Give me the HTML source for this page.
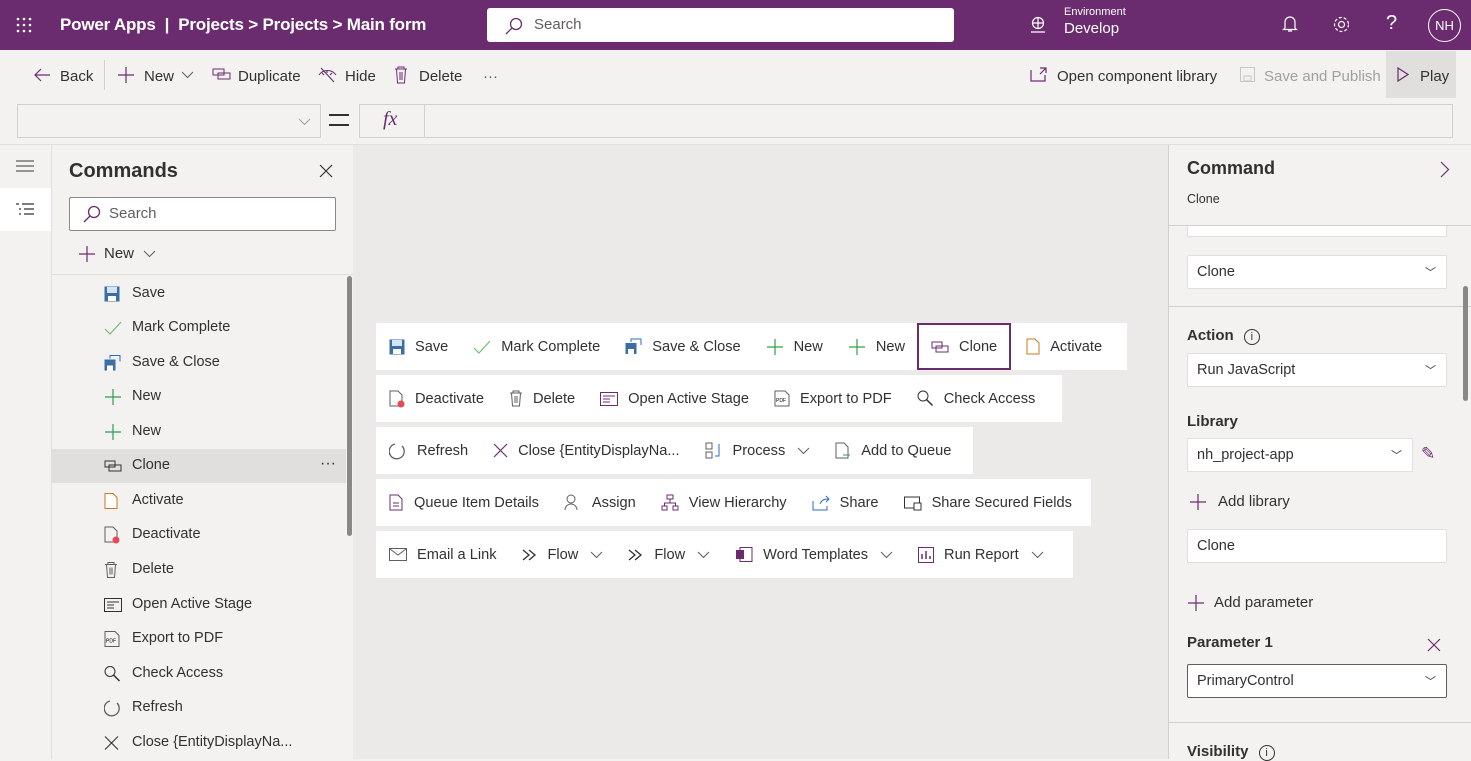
<!DOCTYPE html>
<html><head><meta charset="utf-8"><style>
*{box-sizing:border-box;margin:0;padding:0}
body{width:1471px;height:759px;overflow:hidden;font-family:"Segoe UI","Liberation Sans",sans-serif;background:#f3f2f1;color:#323130;position:relative;font-size:14px}
.a{position:absolute;white-space:nowrap}
.hdr{left:0;top:0;width:1471px;height:50px;background:#6b2c6f;color:#fff}
svg{display:block;flex-shrink:0}
.row{position:absolute;left:376px;height:47px;background:#fff;display:flex;align-items:center;font-size:14.6px;overflow:hidden;white-space:nowrap}
.it{display:flex;align-items:center;padding:0 12px 0 13px;height:100%;flex-shrink:0;white-space:nowrap}
.it svg{margin-right:10px}
.it svg.cv{margin:0 0 0 12px}
.li{position:absolute;left:52px;width:294px;height:34px;font-size:14.5px}
.li svg{position:absolute;left:52px;top:50%;transform:translateY(-50%)}
.li span{position:absolute;left:80px;top:8px}
.dd{position:absolute;left:1187px;width:260px;background:#fff;border:1px solid #e1dfdd;border-radius:2px;height:34px;font-size:14.5px;padding-left:9px;display:flex;align-items:center}
.lbl{position:absolute;left:1187px;font-weight:600;font-size:15px}
.chev{position:absolute;right:10px;top:8px;font-size:11px}
.tb{position:absolute;top:65px;font-size:15px;display:flex;align-items:center;height:22px;white-space:nowrap}
</style></head><body>
<div class="a hdr">
 <svg class="a" style="left:16px;top:17px" width="16" height="16"><g fill="#fff"><circle cx="2" cy="2" r="1.3"/><circle cx="8" cy="2" r="1.3"/><circle cx="14" cy="2" r="1.3"/><circle cx="2" cy="8" r="1.3"/><circle cx="8" cy="8" r="1.3"/><circle cx="14" cy="8" r="1.3"/><circle cx="2" cy="14" r="1.3"/><circle cx="8" cy="14" r="1.3"/><circle cx="14" cy="14" r="1.3"/></g></svg>
 <div class="a" style="left:60px;top:15px;font-size:17px;font-weight:600;letter-spacing:-0.2px">Power Apps &nbsp;| &nbsp;Projects &gt; Projects &gt; Main form</div>
 <div class="a" style="left:487px;top:8px;width:467px;height:34px;background:#fff;border-radius:3px"></div>
 <svg class="a" style="left:505px;top:17px" width="18" height="18"><circle cx="11" cy="7" r="5.5" stroke="#6b2c6f" stroke-width="1.3" fill="none"/><path d="M7 11L1 17" stroke="#6b2c6f" stroke-width="1.3"/></svg>
 <div class="a" style="left:534px;top:16px;color:#605e5c;font-size:15px">Search</div>
 <svg class="a" style="left:1029px;top:16px" width="18" height="18"><circle cx="9" cy="7" r="5.5" stroke="#fff" fill="none" stroke-width="1.2"/><path d="M3.5 7h11M9 1.5v11M2 16h14" stroke="#fff" stroke-width="1.2"/></svg>
 <div class="a" style="left:1064px;top:6px;font-size:11px">Environment</div>
 <div class="a" style="left:1064px;top:20px;font-size:15px">Develop</div>
 <svg class="a" style="left:1282px;top:15px" width="16" height="18"><path d="M3 13V7a5 5 0 0110 0v6l1.5 1.5h-13zM6 16h4" stroke="#fff" fill="none" stroke-width="1.2"/></svg>
 <svg class="a" style="left:1332px;top:15px" width="19" height="19"><circle cx="9.5" cy="9.5" r="3" stroke="#fff" fill="none" stroke-width="1.2"/><circle cx="9.5" cy="9.5" r="7" stroke="#fff" fill="none" stroke-width="1.2" stroke-dasharray="3 2"/></svg>
 <div class="a" style="left:1386px;top:12px;font-size:20px;font-weight:300">?</div>
 <div class="a" style="left:1428px;top:9px;width:33px;height:33px;border:1.3px solid #fff;border-radius:50%;font-size:13px;text-align:center;line-height:31px">NH</div>
</div>
<!-- toolbar -->
<div class="a" style="left:0;top:50px;width:1471px;height:50px;background:#f3f2f1"></div>
<svg class="a" style="left:33px;top:67px" width="18" height="16"><path d="M17 8H2M8 2L2 8l6 6" fill="none" stroke="#6b2c6f" stroke-width="1.2"/></svg>
<div class="tb" style="left:60px">Back</div>
<div class="a" style="left:104px;top:60px;width:1px;height:30px;background:#d2d0ce"></div>
<svg class="a" style="left:117px;top:66px" width="18" height="18"><path d="M9 1v16M1 9h16" stroke="#6b2c6f" stroke-width="1.2"/></svg>
<div class="tb" style="left:144px">New</div>
<svg class="a" style="left:181px;top:71px" width="13" height="8"><path d="M1 1l5.5 5.5L12 1" fill="none" stroke="#605e5c"/></svg>
<svg class="a" style="left:212px;top:68px" width="19" height="12"><rect x="1" y="1" width="11" height="6" fill="none" stroke="#6b2c6f"/><rect x="6" y="5" width="12" height="6" fill="none" stroke="#6b2c6f"/></svg>
<div class="tb" style="left:238px">Duplicate</div>
<svg class="a" style="left:318px;top:67px" width="19" height="16"><path d="M1 8c4-6 13-6 17 0M4 6l2 2M9 4v2M14 6l-2 2M3 1l13 14" fill="none" stroke="#6b2c6f" stroke-width="1.1"/></svg>
<div class="tb" style="left:345px">Hide</div>
<svg class="a" style="left:394px;top:66px" width="14" height="18"><path d="M1 3h12M4 3V1h6v2M2.5 3l1 14h7l1-14M6 6v8M8 6v8" fill="none" stroke="#6b2c6f"/></svg>
<div class="tb" style="left:419px">Delete</div>
<div class="tb" style="left:483px;color:#605e5c">···</div>
<svg class="a" style="left:1030px;top:67px" width="18" height="15"><path d="M1 3v11h14V8M10 1h6v5M16 1l-6 6" fill="none" stroke="#6b2c6f" stroke-width="1.2"/></svg>
<div class="tb" style="left:1057px">Open component library</div>
<svg class="a" style="left:1240px;top:67px" width="15" height="15"><rect x=".5" y=".5" width="14" height="14" fill="none" stroke="#c8c6c4"/><rect x="4" y="9" width="7" height="5" fill="none" stroke="#c8c6c4"/></svg>
<div class="tb" style="left:1264px;color:#a19f9d">Save and Publish</div>
<div class="a" style="left:1386px;top:51px;width:70px;height:47px;background:#e1dfdd"></div>
<svg class="a" style="left:1397px;top:67px" width="12" height="15"><path d="M1 1l10 6.5L1 14z" fill="none" stroke="#6b2c6f" stroke-width="1.2"/></svg>
<div class="tb" style="left:1420px">Play</div>
<!-- formula -->
<div class="a" style="left:17px;top:104px;width:304px;height:34px;background:#f3f2f1;border:1px solid #d2d0ce"></div>
<svg class="a" style="left:298px;top:118px" width="13" height="8"><path d="M1 1l5.5 5.5L12 1" fill="none" stroke="#a19f9d"/></svg>
<div class="a" style="left:329px;top:114px;width:20px;height:2px;background:#323130"></div>
<div class="a" style="left:329px;top:124px;width:20px;height:2px;background:#323130"></div>
<div class="a" style="left:359px;top:104px;width:1094px;height:34px;background:#f3f2f1;border:1px solid #d2d0ce"></div>
<div class="a" style="left:424px;top:104px;width:1px;height:34px;background:#d2d0ce"></div>
<div class="a" style="left:383px;top:108px;font-family:'Liberation Serif',serif;font-style:italic;font-size:20px;color:#6b2c6f">fx</div>
<div class="a" style="left:0;top:144px;width:1471px;height:1px;background:#e1dfdd"></div>
<!-- left rail -->
<div class="a" style="left:51px;top:145px;width:1px;height:614px;background:#e1dfdd"></div>
<svg class="a" style="left:16px;top:160px" width="18" height="13"><path d="M0 1h18M0 6h18M0 11h18" stroke="#605e5c" stroke-width="1.2"/></svg>
<div class="a" style="left:0;top:188px;width:51px;height:43px;background:#fff"></div>
<svg class="a" style="left:16px;top:203px" width="18" height="13"><path d="M0 1h3M6 1h12M3 6h2M8 6h10M3 11h2M8 11h10" stroke="#323130" stroke-width="1.3"/></svg>
<!-- commands panel -->
<div class="a" style="left:69px;top:160px;font-size:20px;font-weight:600">Commands</div>
<svg class="a" style="left:319px;top:164px" width="14" height="14"><path d="M1 1l12 12M13 1L1 13" stroke="#323130" stroke-width="1.2"/></svg>
<div class="a" style="left:69px;top:197px;width:267px;height:34px;background:#fff;border:1px solid #8a8886;border-radius:2px"></div>
<svg class="a" style="left:83px;top:205px" width="18" height="18"><circle cx="11" cy="7" r="5.5" stroke="#6b2c6f" stroke-width="1.3" fill="none"/><path d="M7 11L1 17" stroke="#6b2c6f" stroke-width="1.3"/></svg>
<div class="a" style="left:109px;top:205px;color:#605e5c;font-size:15px">Search</div>
<svg class="a" style="left:78px;top:245px" width="18" height="18"><path d="M9 1v16M1 9h16" stroke="#6b2c6f" stroke-width="1.2"/></svg>
<div class="a" style="left:104px;top:245px;font-size:15px">New</div>
<svg class="a" style="left:143px;top:250px" width="13" height="8"><path d="M1 1l5.5 5.5L12 1" fill="none" stroke="#605e5c"/></svg>
<div class="a" style="left:52px;top:274px;width:301px;height:1px;background:#e1dfdd"></div>
<div class="a" style="left:347px;top:276px;width:5px;height:260px;background:#8a8886;border-radius:3px"></div>
<div class="a" style="left:52px;top:449px;width:294px;height:34px;background:#e1dfdd"></div>
<div class="a" style="left:320px;top:455px;font-size:16px">···</div>
<!-- canvas -->
<div class="a" style="left:353px;top:145px;width:815px;height:614px;background:#ebeae9"></div>
<div class="row" style="top:323px;width:751px">
 <div class="it"><svg width="16" height="16"><rect x=".5" y=".5" width="15" height="15" fill="#3a6ea5"/><rect x="3" y="1" width="10" height="6" fill="#d4e4f5"/><rect x="4" y="10" width="8" height="5" fill="#fff"/></svg>Save</div>
 <div class="it"><svg width="18" height="14"><path d="M1 8l5 5L17 1" fill="none" stroke="#6fbf73" stroke-width="1.2"/></svg>Mark Complete</div>
 <div class="it"><svg width="17" height="17"><rect x=".5" y="5" width="11" height="11" fill="#3a6ea5"/><rect x="3" y="11" width="6" height="5" fill="#fff"/><path d="M6 4V1h10v6" fill="none" stroke="#2b6cc4"/></svg>Save &amp; Close</div>
 <div class="it"><svg width="18" height="18"><path d="M9 1v16M1 9h16" stroke="#2e9f4c" stroke-width="1.2"/></svg>New</div>
 <div class="it"><svg width="18" height="18"><path d="M9 1v16M1 9h16" stroke="#2e9f4c" stroke-width="1.2"/></svg>New</div>
 <div class="it" style="border:2px solid #6b2c6f;height:47px;padding:0 12px"><svg width="18" height="12"><rect x="1" y="1" width="10" height="6" fill="none" stroke="#6b2c6f"/><rect x="5" y="5" width="12" height="6" fill="none" stroke="#6b2c6f"/></svg>Clone</div>
 <div class="it" style="margin-left:2px"><svg width="14" height="17"><path d="M1 1h8l4 4v11H1z" fill="#fff" stroke="#c87b1a"/></svg>Activate</div>
</div>
<div class="row" style="top:375px;width:686px">
 <div class="it"><svg width="16" height="18"><path d="M1 1h8l4 4v11H1z" fill="#fff" stroke="#605e5c"/><circle cx="12" cy="14" r="3.5" fill="#e74856"/></svg>Deactivate</div>
 <div class="it"><svg width="14" height="17"><path d="M1 3h12M4 3V1h6v2M2.5 3l1 13h7l1-13M6 6v7M8 6v7" fill="none" stroke="#605e5c"/></svg>Delete</div>
 <div class="it"><svg width="18" height="14"><rect x=".5" y=".5" width="17" height="13" fill="none" stroke="#6b2c6f"/><path d="M3 4h12M3 7h7M3 10h7" stroke="#6b2c6f"/></svg>Open Active Stage</div>
 <div class="it"><svg width="16" height="17"><path d="M1 1h10l4 4v11H1z" fill="none" stroke="#605e5c"/><text x="2" y="12" font-size="5" font-family="Liberation Sans">PDF</text></svg>Export to PDF</div>
 <div class="it"><svg width="17" height="17"><circle cx="6" cy="6" r="5" fill="none" stroke="#323130"/><path d="M9.5 9.5l6 6" stroke="#323130" stroke-width="1.5"/></svg>Check Access</div>
</div>
<div class="row" style="top:427px;width:597px">
 <div class="it"><svg width="18" height="18"><path d="M6 2A7.5 7.5 0 1013 4" fill="none" stroke="#605e5c" stroke-width="1.3"/></svg>Refresh</div>
 <div class="it"><svg width="15" height="15"><path d="M1 1l13 13M14 1L1 14" stroke="#6b2c6f" stroke-width="1.2"/></svg>Close {EntityDisplayNa...</div>
 <div class="it"><svg width="18" height="17"><rect x="1" y="1" width="6" height="6" fill="none" stroke="#605e5c"/><rect x="1" y="10" width="6" height="6" fill="none" stroke="#605e5c"/><path d="M14 2v12h-4" fill="none" stroke="#2b6cc4"/></svg>Process<svg class="cv" width="13" height="8"><path d="M1 1l5.5 5.5L12 1" fill="none" stroke="#605e5c"/></svg></div>
 <div class="it"><svg width="16" height="17"><path d="M1 1h8l4 4v11H1z" fill="none" stroke="#605e5c"/><path d="M8 13h7" stroke="#2e9f4c"/></svg>Add to Queue</div>
</div>
<div class="row" style="top:479px;width:715px">
 <div class="it"><svg width="15" height="17"><path d="M1 1h8l4 4v11H1z" fill="none" stroke="#6b2c6f"/><path d="M4 9h6M4 12h6" stroke="#6b2c6f"/></svg>Queue Item Details</div>
 <div class="it"><svg width="18" height="17"><circle cx="7" cy="5" r="4" fill="none" stroke="#605e5c"/><path d="M1 16a6 6 0 0112 0" fill="none" stroke="#605e5c"/></svg>Assign</div>
 <div class="it"><svg width="18" height="17"><rect x="6" y="1" width="6" height="4" fill="none" stroke="#6b2c6f"/><rect x="1" y="12" width="5" height="4" fill="none" stroke="#6b2c6f"/><rect x="12" y="12" width="5" height="4" fill="none" stroke="#6b2c6f"/><path d="M9 5v4M3.5 12V9h11v3" fill="none" stroke="#6b2c6f"/></svg>View Hierarchy</div>
 <div class="it"><svg width="18" height="16"><path d="M1 6v9h14v-4M8 9c2-5 5-5 9-5M14 1l3 3-3 3" fill="none" stroke="#2b6cc4"/></svg>Share</div>
 <div class="it"><svg width="18" height="16"><rect x=".5" y="2" width="15" height="11" fill="none" stroke="#323130"/><rect x="10" y="8" width="7" height="7" fill="#fff" stroke="#323130"/></svg>Share Secured Fields</div>
</div>
<div class="row" style="top:531px;width:697px">
 <div class="it"><svg width="18" height="14"><rect x=".5" y=".5" width="17" height="12" fill="none" stroke="#605e5c"/><path d="M1 1l8 6 8-6" fill="none" stroke="#605e5c"/></svg>Email a Link</div>
 <div class="it"><svg width="16" height="12"><path d="M1 1l6 5-6 5M7 1l6 5-6 5" fill="none" stroke="#323130" stroke-width="1.3"/></svg>Flow<svg class="cv" width="13" height="8"><path d="M1 1l5.5 5.5L12 1" fill="none" stroke="#605e5c"/></svg></div>
 <div class="it"><svg width="16" height="12"><path d="M1 1l6 5-6 5M7 1l6 5-6 5" fill="none" stroke="#323130" stroke-width="1.3"/></svg>Flow<svg class="cv" width="13" height="8"><path d="M1 1l5.5 5.5L12 1" fill="none" stroke="#605e5c"/></svg></div>
 <div class="it"><svg width="18" height="15"><rect x="5" y=".5" width="12" height="14" fill="none" stroke="#6b2c6f"/><rect x="1" y="3" width="8" height="9" fill="#6b2c6f"/></svg>Word Templates<svg class="cv" width="13" height="8"><path d="M1 1l5.5 5.5L12 1" fill="none" stroke="#605e5c"/></svg></div>
 <div class="it"><svg width="16" height="16"><rect x=".5" y=".5" width="15" height="15" fill="none" stroke="#6b2c6f"/><path d="M4 12V7M8 12V4M12 12V9" stroke="#6b2c6f" stroke-width="1.5"/></svg>Run Report<svg class="cv" width="13" height="8"><path d="M1 1l5.5 5.5L12 1" fill="none" stroke="#605e5c"/></svg></div>
</div>
<!-- right panel -->
<div class="a" style="left:1168px;top:145px;width:1px;height:614px;background:#d2d0ce"></div>
<div class="a" style="left:1187px;top:158px;font-size:18px;font-weight:600">Command</div>
<svg class="a" style="left:1440px;top:161px" width="10" height="17"><path d="M1 1l7.5 7.5L1 16" fill="none" stroke="#6b2c6f" stroke-width="1.2"/></svg>
<div class="a" style="left:1187px;top:192px;font-size:12.5px">Clone</div>
<div class="a" style="left:1169px;top:225px;width:302px;height:1px;background:#d2d0ce"></div>
<div class="a" style="left:1187px;top:226px;width:260px;height:11px;background:#fff;border:1px solid #e1dfdd;border-top:none"></div>
<div class="dd" style="top:255px">Clone<span class="chev">﹀</span></div>
<div class="a" style="left:1169px;top:306px;width:302px;height:1px;background:#d2d0ce"></div>
<div class="a" style="left:1463px;top:286px;width:5px;height:115px;background:#8a8886;border-radius:3px"></div>
<div class="lbl" style="top:327px">Action <span style="display:inline-block;width:16px;height:16px;border:1.2px solid #323130;border-radius:50%;font-size:11px;text-align:center;line-height:14px;margin-left:6px;font-weight:400">i</span></div>
<div class="dd" style="top:353px">Run JavaScript<span class="chev">﹀</span></div>
<div class="lbl" style="top:413px">Library</div>
<div class="dd" style="top:438px;width:226px">nh_project-app<span class="chev">﹀</span></div>
<div class="a" style="left:1421px;top:444px;color:#6b2c6f;font-size:17px">✎</div>
<svg class="a" style="left:1189px;top:493px" width="18" height="18"><path d="M9 1v16M1 9h16" stroke="#6b2c6f" stroke-width="1.2"/></svg>
<div class="a" style="left:1218px;top:493px;font-size:15px">Add library</div>
<div class="dd" style="top:529px">Clone</div>
<svg class="a" style="left:1187px;top:594px" width="18" height="18"><path d="M9 1v16M1 9h16" stroke="#6b2c6f" stroke-width="1.2"/></svg>
<div class="a" style="left:1214px;top:594px;font-size:15px">Add parameter</div>
<div class="lbl" style="top:634px">Parameter 1</div>
<svg class="a" style="left:1427px;top:638px" width="14" height="14"><path d="M1 1l12 12M13 1L1 13" stroke="#6b2c6f" stroke-width="1.2"/></svg>
<div class="dd" style="top:664px;border:1px solid #605e5c">PrimaryControl<span class="chev">﹀</span></div>
<div class="a" style="left:1169px;top:722px;width:302px;height:1px;background:#d2d0ce"></div>
<div class="lbl" style="top:743px">Visibility <span style="display:inline-block;width:16px;height:16px;border:1.2px solid #323130;border-radius:50%;font-size:11px;text-align:center;line-height:14px;margin-left:6px;font-weight:400">i</span></div>

<div class="li" style="top:277px"><svg width="16" height="16"><rect x=".5" y=".5" width="15" height="15" fill="#3a6ea5"/><rect x="3" y="1" width="10" height="6" fill="#d4e4f5"/><rect x="4" y="10" width="8" height="5" fill="#fff"/></svg><span>Save</span></div>
<div class="li" style="top:311px"><svg width="18" height="14"><path d="M1 8l5 5L17 1" fill="none" stroke="#6fbf73" stroke-width="1.2"/></svg><span>Mark Complete</span></div>
<div class="li" style="top:346px"><svg width="17" height="17"><rect x=".5" y="5" width="11" height="11" fill="#3a6ea5"/><rect x="3" y="11" width="6" height="5" fill="#fff"/><path d="M6 4V1h10v6" fill="none" stroke="#2b6cc4"/></svg><span>Save &amp; Close</span></div>
<div class="li" style="top:380px"><svg width="18" height="18"><path d="M9 1v16M1 9h16" stroke="#2e9f4c" stroke-width="1.2"/></svg><span>New</span></div>
<div class="li" style="top:415px"><svg width="18" height="18"><path d="M9 1v16M1 9h16" stroke="#2e9f4c" stroke-width="1.2"/></svg><span>New</span></div>
<div class="li" style="top:449px"><svg width="18" height="12"><rect x="1" y="1" width="10" height="6" fill="none" stroke="#323130"/><rect x="5" y="5" width="12" height="6" fill="none" stroke="#323130"/></svg><span>Clone</span></div>
<div class="li" style="top:484px"><svg width="14" height="17"><path d="M1 1h8l4 4v11H1z" fill="#fff" stroke="#c87b1a"/></svg><span>Activate</span></div>
<div class="li" style="top:518px"><svg width="16" height="18"><path d="M1 1h8l4 4v11H1z" fill="none" stroke="#605e5c"/><circle cx="12" cy="14" r="3.5" fill="#e74856"/></svg><span>Deactivate</span></div>
<div class="li" style="top:553px"><svg width="14" height="17"><path d="M1 3h12M4 3V1h6v2M2.5 3l1 13h7l1-13M6 6v7M8 6v7" fill="none" stroke="#605e5c"/></svg><span>Delete</span></div>
<div class="li" style="top:588px"><svg width="18" height="14"><rect x=".5" y=".5" width="17" height="13" fill="none" stroke="#323130"/><path d="M3 4h12M3 7h7M3 10h7" stroke="#323130"/></svg><span>Open Active Stage</span></div>
<div class="li" style="top:622px"><svg width="16" height="17"><path d="M1 1h10l4 4v11H1z" fill="none" stroke="#605e5c"/><text x="2" y="12" font-size="5" font-family="Liberation Sans">PDF</text></svg><span>Export to PDF</span></div>
<div class="li" style="top:657px"><svg width="17" height="17"><circle cx="6" cy="6" r="5" fill="none" stroke="#323130"/><path d="M9.5 9.5l6 6" stroke="#323130" stroke-width="1.5"/></svg><span>Check Access</span></div>
<div class="li" style="top:691px"><svg width="18" height="18"><path d="M6 2A7.5 7.5 0 1013 4" fill="none" stroke="#605e5c" stroke-width="1.3"/></svg><span>Refresh</span></div>
<div class="li" style="top:726px"><svg width="15" height="15"><path d="M1 1l13 13M14 1L1 14" stroke="#323130" stroke-width="1.1"/></svg><span>Close {EntityDisplayNa...</span></div>
</body></html>
